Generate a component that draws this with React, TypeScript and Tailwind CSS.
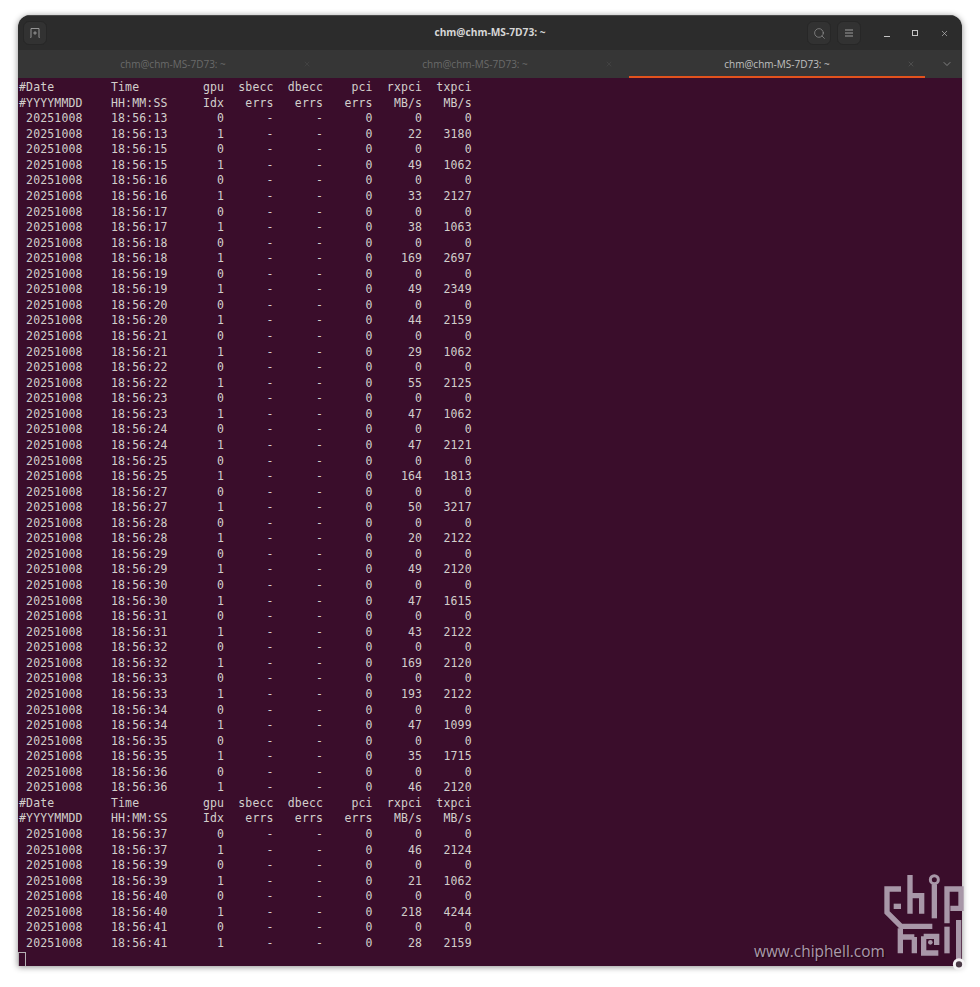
import { Search, X, ChevronDown } from "lucide-react";

const samples: [string, number, number][] = [
  ["18:56:13", 22, 3180],
  ["18:56:15", 49, 1062],
  ["18:56:16", 33, 2127],
  ["18:56:17", 38, 1063],
  ["18:56:18", 169, 2697],
  ["18:56:19", 49, 2349],
  ["18:56:20", 44, 2159],
  ["18:56:21", 29, 1062],
  ["18:56:22", 55, 2125],
  ["18:56:23", 47, 1062],
  ["18:56:24", 47, 2121],
  ["18:56:25", 164, 1813],
  ["18:56:27", 50, 3217],
  ["18:56:28", 20, 2122],
  ["18:56:29", 49, 2120],
  ["18:56:30", 47, 1615],
  ["18:56:31", 43, 2122],
  ["18:56:32", 169, 2120],
  ["18:56:33", 193, 2122],
  ["18:56:34", 47, 1099],
  ["18:56:35", 35, 1715],
  ["18:56:36", 46, 2120],
];

const samples2: [string, number, number][] = [
  ["18:56:37", 46, 2124],
  ["18:56:39", 21, 1062],
  ["18:56:40", 218, 4244],
  ["18:56:41", 28, 2159],
];

const header = [
  "#Date        Time         gpu  sbecc  dbecc    pci  rxpci  txpci",
  "#YYYYMMDD    HH:MM:SS     Idx   errs   errs   errs   MB/s   MB/s",
];

// one dmon row, same column widths as the terminal output
const row = (time: string, gpu: number, rx: number, tx: number): string =>
  " 20251008    " +
  time +
  String(gpu).padStart(8) +
  "-".padStart(7) +
  "-".padStart(7) +
  "0".padStart(7) +
  String(rx).padStart(7) +
  String(tx).padStart(7);

const block = (items: [string, number, number][]): string[] =>
  items.flatMap(([time, rx, tx]) => [row(time, 0, 0, 0), row(time, 1, rx, tx)]);

const lines = [...header, ...block(samples), ...header, ...block(samples2)];

function Tab({ active }: { active?: boolean }) {
  return (
    <div
      className={`relative flex h-full w-[296px] items-center justify-center ${
        active ? "text-[#c0c0c0]" : "text-[#6a6a6a]"
      }`}
    >
      <span className="text-[10px]">chm@chm-MS-7D73: ~</span>
      <X
        className={`absolute right-[10px] top-[10px] h-2 w-2 ${
          active ? "text-[#666]" : "text-[#4f4f4f]"
        }`}
        strokeWidth={1.5}
      />
      {active && <div className="absolute inset-x-0 bottom-0 h-[2px] bg-[#e2521d]" />}
    </div>
  );
}

function HeaderButton({ children }: { children: React.ReactNode }) {
  return (
    <div className="flex h-[24px] w-[24px] items-center justify-center rounded-[6px] border border-[#272727] bg-[#323232] text-[#a8a8a8]">
      {children}
    </div>
  );
}

function Watermark() {
  return (
    <div className="absolute left-[754px] top-[865px] flex items-end">
      <span className="mb-[15px] w-[121px] whitespace-nowrap font-['Open_Sans',sans-serif] text-[15.4px] leading-[20px] text-[#ab9bab] [text-shadow:1px_1px_1px_#1c0614]">
        www.chiphell.com
      </span>
      <svg width="100" height="112" viewBox="0 0 300 336" fill="none" stroke="#a897a8" strokeWidth="16">
        {/* c runs down into the h of the second word */}
        <path d="M78 72H36V142L78 184H172" />
        <path d="M56 124H78" />
        <path d="M105 30V146M105 92H140V146" />
        <path d="M178 58V160" />
        <circle cx="178" cy="44" r="12" strokeWidth="9" />
        <path d="M216 175V72H258V130H226" />
        <path d="M76 190V265M76 216H118M118 216V265" />
        <path d="M146 214H185V240M146 214V264H190" />
        <circle cx="166" cy="232" r="7" fill="#a897a8" stroke="none" />
        <path d="M216 185V265" />
        <path d="M251 165V285" />
        <circle cx="252" cy="298" r="14" fill="#4b3a46" stroke="#f4f2f4" strokeWidth="9" />
      </svg>
    </div>
  );
}

export default function App() {
  return (
    <div className="relative h-[987px] w-[980px] overflow-hidden bg-white pl-[18px] pt-[15px] font-['Open_Sans',sans-serif]">
      <div className="flex h-[951px] w-[944px] flex-col overflow-hidden rounded-t-[12px] shadow-[0_1px_6px_rgba(0,0,0,0.45)]">
        {/* title bar */}
        <div className="relative flex h-[35px] shrink-0 items-center border-t border-[#4a4a4a] bg-[#2c2c2c] pl-[5px] pr-[13px]">
          <HeaderButton>
            <svg width="12" height="12" viewBox="0 0 12 12" fill="none" stroke="#a0a0a0" strokeWidth="0.9">
              <path d="M1.5 10.5H2V1.5H10V10.5H10.5M4.2 6H7.8M6 4.2V7.8" />
            </svg>
          </HeaderButton>
          <span className="absolute inset-x-0 text-center text-[10.2px] font-bold text-[#d6d6d6]">
            chm@chm-MS-7D73: ~
          </span>
          <div className="ml-auto flex items-center gap-[6px]">
            <HeaderButton>
              <Search className="h-[13px] w-[13px]" strokeWidth={1.1} />
            </HeaderButton>
            <HeaderButton>
              <svg width="10" height="10" viewBox="0 0 10 10" stroke="#9c9c9c" strokeWidth="1">
                <path d="M1 2H9M1 5H9M1 8H9" />
              </svg>
            </HeaderButton>
            <div className="ml-[17px] flex w-[65px] items-center justify-between">
              <div className="mt-[6px] h-px w-[6px] bg-[#c4c4c4]" />
              <div className="h-[6px] w-[6px] border border-[#c4c4c4]" />
              <X className="h-[9px] w-[9px] text-[#c4c4c4]" strokeWidth={1.7} />
            </div>
          </div>
        </div>
        {/* tabs */}
        <div className="relative flex h-[28px] shrink-0 items-center gap-[6px] bg-[#363636] pl-[7px]">
          <Tab />
          <Tab />
          <Tab active />
          <ChevronDown className="ml-[10px] h-[12px] w-[12px] text-[#9a9a9a]" strokeWidth={1.5} />
        </div>
        {/* terminal */}
        <div className="flex-1 overflow-hidden bg-[#3a0d2b] pt-[2px] text-[#d2cfcb]">
          <pre className="whitespace-pre pl-px font-['DejaVu_Sans_Mono',monospace] text-[11.5px] leading-[15.56px] tracking-[0.15px]">
            {lines.join("\n")}
          </pre>
          <div className="h-[17px] w-[8px] border border-[#b5b0b4]" />
        </div>
      </div>
      <Watermark />
    </div>
  );
}
